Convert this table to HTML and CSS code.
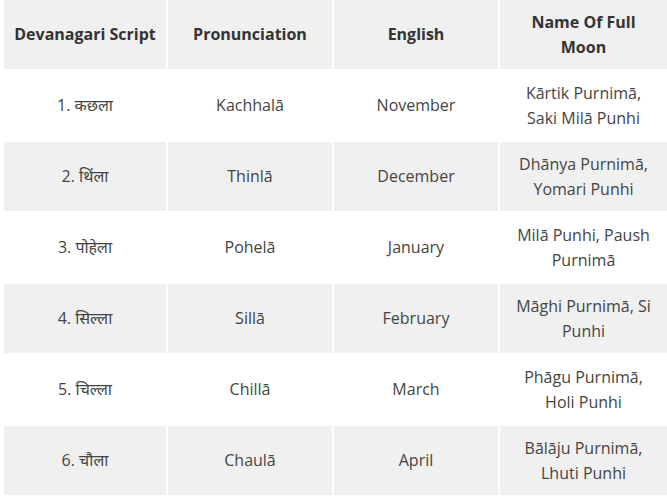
FILE: index.html
```html
<!DOCTYPE html>
<html>
<head>
<meta charset="utf-8">
<link rel="stylesheet" href="styles.css">
</head>
<body>
<table class="moons">
  <colgroup>
    <col class="c1"><col class="c2"><col class="c3"><col class="c4">
  </colgroup>
  <thead>
    <tr><th>Devanagari Script</th><th>Pronunciation</th><th>English</th><th>Name Of Full Moon</th></tr>
  </thead>
  <tbody>
    <tr><td>1. कछला</td><td>Kachhalā</td><td>November</td><td>Kārtik Purnimā, Saki Milā Punhi</td></tr>
    <tr><td>2. थिंला</td><td>Thinlā</td><td>December</td><td>Dhānya Purnimā, Yomari Punhi</td></tr>
    <tr><td>3. पोहेला</td><td>Pohelā</td><td>January</td><td>Milā Punhi, Paush Purnimā</td></tr>
    <tr><td>4. सिल्ला</td><td>Sillā</td><td>February</td><td>Māghi Purnimā, Si Punhi</td></tr>
    <tr><td>5. चिल्ला</td><td>Chillā</td><td>March</td><td>Phāgu Purnimā, Holi Punhi</td></tr>
    <tr><td>6. चौला</td><td>Chaulā</td><td>April</td><td>Bālāju Purnimā, Lhuti Punhi</td></tr>
  </tbody>
</table>
</body>
</html>
```
FILE: styles.css
```css
html, body {
  margin: 0;
  padding: 0;
  background: #fff;
  overflow: hidden;
}
.moons {
  table-layout: fixed;
  width: 667px;
  margin: -2px 0 0 2px;
  border-collapse: separate;
  border-spacing: 2px;
  font-family: "Open Sans", "Noto Sans", sans-serif;
  font-size: 16px;
  line-height: 25px;
  color: #444;
}
.c1 { width: 162px; }
.c2 { width: 164px; }
.c3 { width: 164px; }
.c4 { width: 167px; }
.moons th, .moons td {
  box-sizing: border-box;
  height: 69px;
  padding: 9px 6px 9px;
  text-align: center;
  vertical-align: middle;
}
.moons th {
  background: #f0f0f0;
  color: #333;
  font-weight: 700;
  white-space: nowrap;
}
.moons th:last-child,
.moons td:last-child {
  white-space: normal;
  padding-left: 10px;
  padding-right: 10px;
}
.moons tbody tr:nth-child(even) td {
  background: #f0f0f0;
}
.moons tbody tr:nth-child(odd) td {
  background: #fff;
}
```
